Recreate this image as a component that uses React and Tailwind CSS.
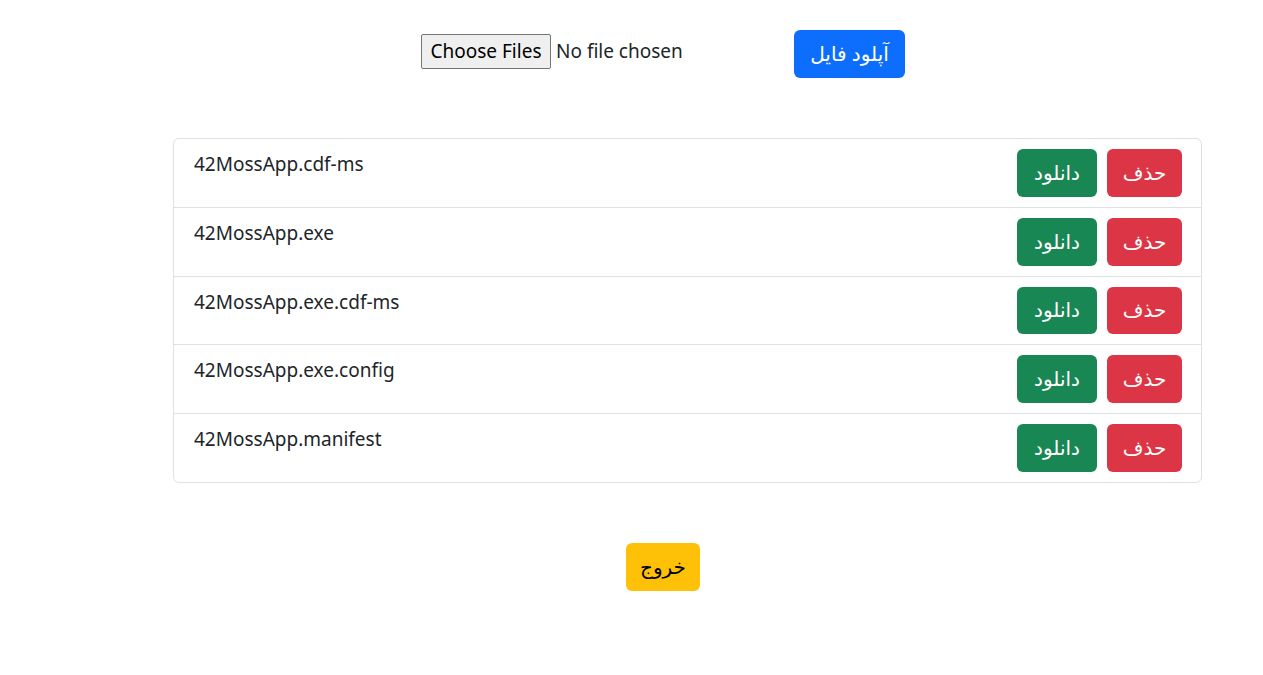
import React from "react";

const files = [
    "42MossApp.cdf-ms",
    "42MossApp.exe",
    "42MossApp.exe.cdf-ms",
    "42MossApp.exe.config",
    "42MossApp.manifest",
];

const font = { fontFamily: '"Noto Sans", "DejaVu Sans", sans-serif' };

export default function App() {
    return (
        <div className="min-h-screen w-full bg-white text-[#212529]" style={font}>
            <div className="flex items-center pl-[421px] pt-[30px]">
                <input
                    type="file"
                    multiple
                    className="mb-[5px] w-[373px] text-[19px] text-[#212529] file:mr-[5px] file:h-[35px] file:w-[130px] file:rounded-[2px] file:border file:border-[#767676] file:bg-[#efefef] file:text-[19px] file:text-black"
                    style={font}
                />
                <button className="flex h-[48px] w-[111px] items-center justify-center rounded-md bg-[#0d6efd] text-[20px] text-white" dir="rtl">
                    آپلود فایل
                </button>
            </div>

            <div className="ml-[173px] mt-[60px] w-[1029px] rounded-md border border-[#dee2e6]">
                {files.map((name, i) => (
                    <div
                        key={name}
                        className={
                            "flex items-start justify-between py-[10px] pl-[20px] pr-[19px] " +
                            (i < files.length - 1 ? "border-b border-[#dee2e6]" : "")
                        }
                    >
                        <span className="pt-[1px] text-[19px] leading-[28px]">{name}</span>
                        <div className="flex gap-[10px]">
                            <button className="flex h-[47.8px] w-[80px] items-center justify-center rounded-md bg-[#198754] text-[20px] text-white">
                                دانلود
                            </button>
                            <button className="flex h-[47.8px] w-[75px] items-center justify-center rounded-md bg-[#dc3545] text-[20px] text-white">
                                حذف
                            </button>
                        </div>
                    </div>
                ))}
            </div>

            <div className="ml-[626px] mt-[60px]">
                <button className="flex h-[48px] w-[74px] items-center justify-center rounded-md bg-[#ffc107] text-[20px] text-black">
                    خروج
                </button>
            </div>
        </div>
    );
}
